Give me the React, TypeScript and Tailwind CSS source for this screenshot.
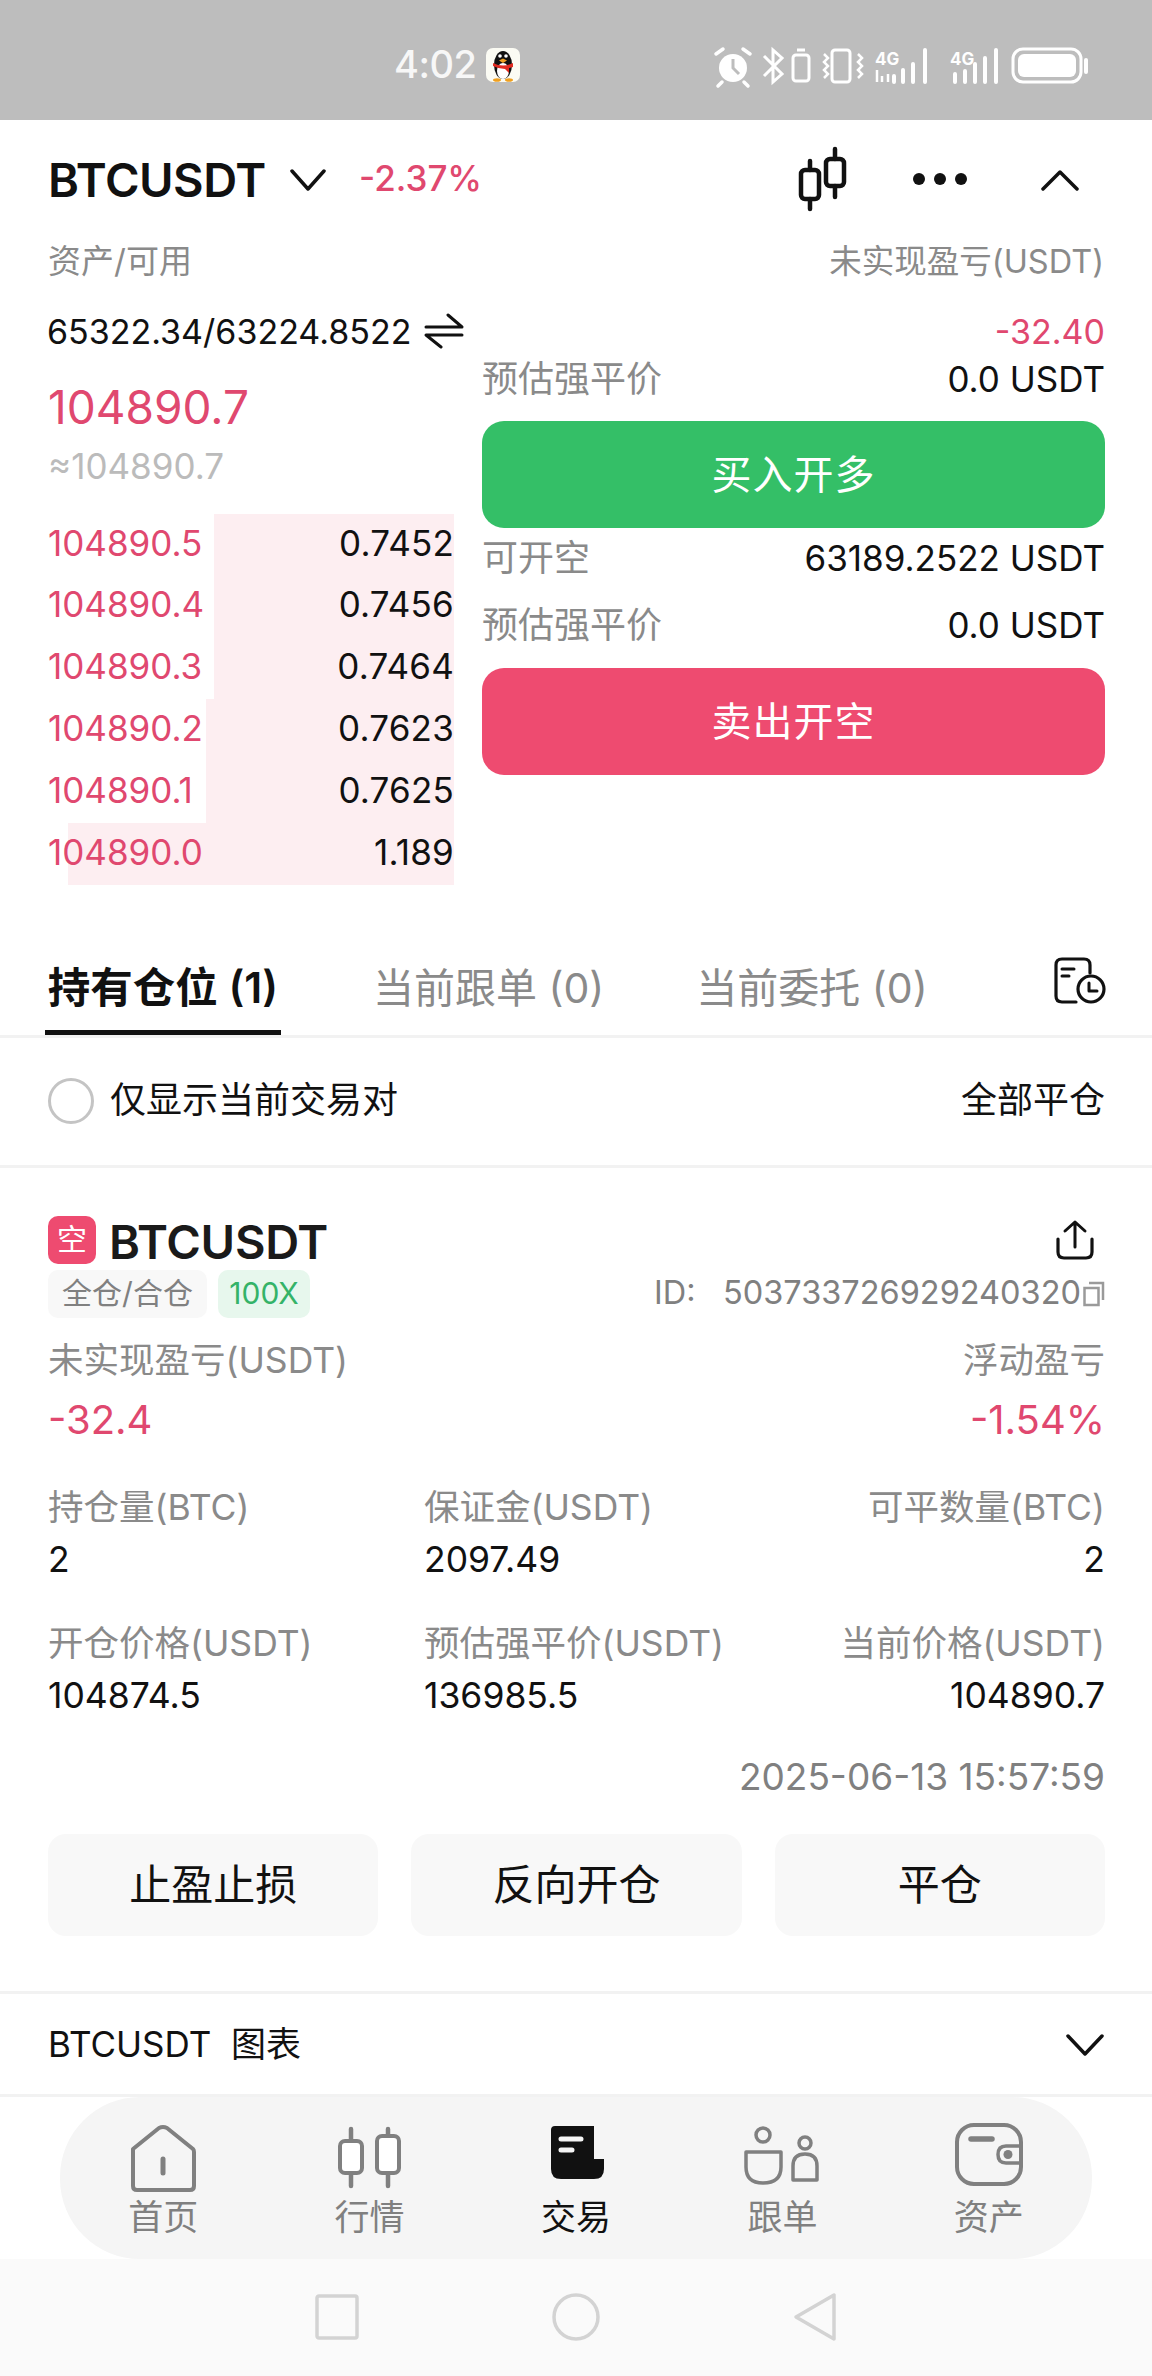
import React from "react";

const font = "font-['Inter','Noto_Sans_CJK_SC',sans-serif]";

function Status() {
  return (
    <div className="h-[120px] bg-[#bdbdbd] flex items-center pl-[394px] pr-[62px] pt-[9px] shrink-0 text-white">
      <span className="text-[38px] font-medium leading-none tracking-[-0.5px] mt-[-1px] text-[#f7f7f7]">4:02</span>
      <svg width="34" height="34" viewBox="0 0 34 34" className="ml-[10px]">
        <rect x="0" y="0" width="34" height="34" rx="7" fill="#fbfbf3" />
        <ellipse cx="17" cy="17" rx="9" ry="14" fill="#111" />
        <ellipse cx="17" cy="23" rx="6" ry="8" fill="#fff" />
        <path d="M13 12.5 L17 10.5 L21 12.5 L17 15Z" fill="#f0a020" />
        <circle cx="14" cy="8" r="1.8" fill="#fff" />
        <circle cx="20" cy="8" r="1.8" fill="#fff" />
        <path d="M7 15 Q17 20 27 15 L27 19 L23 20 L23 25 L19 21 Q13 21 7 18Z" fill="#e02a20" />
        <ellipse cx="11" cy="32" rx="4" ry="1.8" fill="#f0a020" />
        <ellipse cx="23" cy="32" rx="4" ry="1.8" fill="#f0a020" />
      </svg>
      <svg width="380" height="50" viewBox="710 42 380 50" className="ml-auto" fill="none">
        <circle cx="733" cy="70" r="14" fill="#fff" />
        <path d="M733 61 V70 L739 76" stroke="#bdbdbd" strokeWidth="3" />
        <path d="M716 56 L723 51 M750 56 L743 51 M722 84 L718 88 M744 84 L748 88" stroke="#fff" strokeWidth="3.5" strokeLinecap="round" />
        <path d="M764 58 L782 76 L773 84 V52 L782 60 L764 78" stroke="#fff" strokeWidth="3" />
        <rect x="793" y="57" width="16" height="26" rx="3" stroke="#fff" strokeWidth="3" />
        <path d="M797 52 H805" stroke="#fff" strokeWidth="3" />
        <rect x="832" y="52" width="18" height="32" rx="3" stroke="#fff" strokeWidth="3" />
        <path d="M824 56 L828 60 L824 64 L828 68 L824 72 L828 76 L824 80 M858 56 L862 60 L858 64 L862 68 L858 72 L862 76 L858 80" stroke="#fff" strokeWidth="2.5" />
        <text x="875" y="67" fontSize="17" fontWeight="700" fill="#fff" fontFamily="Inter">4G</text>
        <path d="M877 72 V84 M882 78 V84 M888 76 V84" stroke="#fff" strokeWidth="2.5" />
        <path d="M894 78 V84 M903 72 V84 M913 66 V84 M925 52 V84" stroke="#fff" strokeWidth="4" strokeLinecap="round" />
        <text x="950" y="67" fontSize="17" fontWeight="700" fill="#fff" fontFamily="Inter">4G</text>
        <path d="M955 76 V84 M965 73 V84 M975 66 V84 M985 60 V84 M996 52 V84" stroke="#fff" strokeWidth="4" strokeLinecap="round" />
        <rect x="1013" y="51" width="68" height="33" rx="10" stroke="#fff" strokeWidth="3" />
        <rect x="1018" y="56" width="58" height="23" rx="6" fill="#fff" />
        <path d="M1086 62 V74" stroke="#fff" strokeWidth="4" strokeLinecap="round" />
      </svg>
    </div>
  );
}

function Header() {
  return (
    <div className="h-[118px] flex items-center pl-[48px] shrink-0">
      <span className="w-[217px] text-[47px] font-semibold leading-none text-[#111] tracking-[-0.5px] whitespace-nowrap">BTCUSDT</span>
      <svg width="36" height="22" viewBox="0 0 36 22" fill="none" className="ml-[25px] mt-[2px]">
        <path d="M2 2 L18 20 L34 2" stroke="#111" strokeWidth="3.5" strokeLinecap="round" strokeLinejoin="round" />
      </svg>
      <span className="ml-[33px] w-[120px] text-[35px] leading-none text-[#e0486f] font-medium mt-[-2px] whitespace-nowrap">-2.37%</span>
      <svg width="60" height="70" viewBox="0 0 60 70" fill="none" className="ml-[314px]">
        <path d="M17 17 V26 M17 55 V65 M42 5 V15 M42 42 V53" stroke="#111" strokeWidth="4.5" strokeLinecap="round" />
        <rect x="8" y="26" width="18" height="29" rx="4" stroke="#111" strokeWidth="4.5" />
        <rect x="33" y="15" width="18" height="27" rx="4" stroke="#111" strokeWidth="4.5" />
      </svg>
      <svg width="60" height="16" viewBox="0 0 60 16" className="ml-[57px]">
        <circle cx="9" cy="8" r="6" fill="#111" />
        <circle cx="30" cy="8" r="6" fill="#111" />
        <circle cx="51" cy="8" r="6" fill="#111" />
      </svg>
      <svg width="38" height="22" viewBox="0 0 38 22" fill="none" className="ml-[71px] mt-[2px]">
        <path d="M2 20 L19 3 L36 20" stroke="#111" strokeWidth="3.5" strokeLinecap="round" strokeLinejoin="round" />
      </svg>
    </div>
  );
}

const book = [
  { p: "104890.5", q: "0.7452", w: "w-[240px]" },
  { p: "104890.4", q: "0.7456", w: "w-[240px]" },
  { p: "104890.3", q: "0.7464", w: "w-[240px]" },
  { p: "104890.2", q: "0.7623", w: "w-[248px]" },
  { p: "104890.1", q: "0.7625", w: "w-[248px]" },
  { p: "104890.0", q: "1.189", w: "w-[386px]" },
];

function Trade() {
  return (
    <div className="shrink-0">
      <div className="flex justify-between items-center px-[48px] h-[48px] mt-[0px] text-[#8a8a8a]">
        <span className="text-[33px]">资产/可用</span>
        <span className="text-[32.5px] mt-[1px]">未实现盈亏(USDT)</span>
      </div>
      <div className="flex justify-between items-center px-[47px] h-[48px] mt-[21px] text-[34px] text-[#111]">
        <span className="flex items-center">
          65322.34/63224.8522
          <svg width="40" height="36" viewBox="0 0 40 36" fill="none" className="ml-[13px]">
            <path d="M2 14 H38 L24 2 M38 22 H2 L17 34" stroke="#111" strokeWidth="3" strokeLinejoin="round" strokeLinecap="round" />
          </svg>
        </span>
        <span className="text-[#e0486f] text-[34px]">-32.40</span>
      </div>
      <div className="flex pl-[48px] pr-[47px]">
        <div className="w-[406px] shrink-0">
          <div className="text-[46px] leading-[60px] mt-[22px] text-[#e0486f]">104890.7</div>
          <div className="text-[35px] leading-[44px] mt-[7px] text-[#bbbbbb]">≈104890.7</div>
          <div className="mt-[26px] flex flex-col">
            {book.map((r) => (
              <div key={r.p} className="relative h-[61.8px] flex justify-between items-center text-[35px]">
                <div className={`absolute right-0 top-0 bottom-0 bg-[#fdeef1] ${r.w}`} />
                <span className="relative text-[#e0486f] mt-[-4px]">{r.p}</span>
                <span className="relative text-[#111] mt-[-4px] tracking-[0.2px]">{r.q}</span>
              </div>
            ))}
          </div>
        </div>
        <div className="flex-1 ml-[28px]">
          <Kv label="预估强平价" value="0.0 USDT" />
          <div className="h-[107px] mt-[18px] rounded-[22px] bg-[#34bf67] flex items-center justify-center text-white text-[40px] tracking-[1px]">买入开多</div>
          <Kv label="可开空" value="63189.2522 USDT" cls="mt-[6px]" />
          <Kv label="预估强平价" value="0.0 USDT" cls="mt-[19px]" />
          <div className="h-[107px] mt-[19px] rounded-[22px] bg-[#ee4b70] flex items-center justify-center text-white text-[40px] tracking-[1px]">卖出开空</div>
        </div>
      </div>
    </div>
  );
}

function Kv({ label, value, cls = "" }: { label: string; value: string; cls?: string }) {
  return (
    <div className={`flex justify-between items-center h-[48px] ${cls}`}>
      <span className="text-[36px] text-[#8a8a8a]">{label}</span>
      <span className="text-[35px] text-[#111]">{value}</span>
    </div>
  );
}

function Tabs() {
  return (
    <div className="h-[153px] shrink-0 border-b-[3px] border-[#f2f2f2] flex items-end pl-[45px] relative">
      <div className="w-[236px] h-[62px] border-b-[5px] border-[#111] text-[42.5px] font-semibold leading-[30px] text-[#111] whitespace-nowrap flex justify-center">持有仓位 (1)</div>
      <div className="ml-[92px] h-[62px] text-[41px] leading-[30px] text-[#8a8a8a] whitespace-nowrap">当前跟单 (0)</div>
      <div className="ml-[92px] h-[62px] text-[41px] leading-[30px] text-[#8a8a8a] whitespace-nowrap">当前委托 (0)</div>
      <svg width="54" height="48" viewBox="0 0 54 48" fill="none" className="absolute left-[1054px] top-[72px]">
        <path d="M22 45 H8 Q2 45 2 39 V8 Q2 2 8 2 H30 Q36 2 36 8 V16" stroke="#111" strokeWidth="3.2" strokeLinecap="round" />
        <path d="M8 12 H20 M8 19 H15" stroke="#111" strokeWidth="3" strokeLinecap="round" />
        <circle cx="37" cy="32" r="13" stroke="#111" strokeWidth="3.2" />
        <path d="M35 26 V34 H43" stroke="#111" strokeWidth="3" strokeLinecap="round" strokeLinejoin="round" />
      </svg>
    </div>
  );
}

function Filter() {
  return (
    <div className="h-[130px] shrink-0 border-b-[3px] border-[#f2f2f2] flex items-center pl-[48px] pr-[47px]">
      <span className="w-[46px] h-[46px] rounded-full border-[3px] border-[#c4c4c4]" />
      <span className="ml-[16px] text-[36px] text-[#111] mt-[-3px]">仅显示当前交易对</span>
      <span className="ml-auto text-[36px] text-[#111] mt-[-3px]">全部平仓</span>
    </div>
  );
}

function Stat({ label, value, cls }: { label: string; value: string; cls: string }) {
  return (
    <div className={cls}>
      <div className="text-[35.5px] leading-[40px] text-[#8a8a8a] whitespace-nowrap">{label}</div>
      <div className="text-[35.5px] leading-[40px] mt-[12px] text-[#111]">{value}</div>
    </div>
  );
}

function Card() {
  return (
    <div className="pt-[47px] pl-[48px] pr-[47px] h-[826px] shrink-0 border-b-[3px] border-[#f2f2f2]">
      <div className="flex items-center h-[50px]">
        <span className="w-[48px] h-[48px] rounded-[10px] bg-[#ee4b70] text-white text-[30px] flex items-center justify-center">空</span>
        <span className="ml-[13px] text-[47px] font-semibold leading-none text-[#1a1a1a] tracking-[-0.3px] mt-[4px]">BTCUSDT</span>
        <svg width="40" height="42" viewBox="0 0 40 42" fill="none" className="ml-auto mr-[10px]">
          <path d="M20 28 V3 M10 12 L20 3 L30 12" stroke="#111" strokeWidth="3" strokeLinecap="round" strokeLinejoin="round" />
          <path d="M3 20 V33 Q3 39 9 39 H31 Q37 39 37 33 V20" stroke="#111" strokeWidth="3.2" strokeLinecap="round" />
        </svg>
      </div>
      <div className="flex items-center h-[50px] mt-[4px]">
        <span className="h-[48px] w-[159px] rounded-[10px] bg-[#f8f8f8] text-[30px] text-[#808080] flex items-center justify-center">全仓/合仓</span>
        <span className="h-[48px] w-[92px] ml-[11px] rounded-[10px] bg-[#e7f7ed] text-[30px] text-[#34b368] flex items-center justify-center">100X</span>
        <span className="ml-auto text-[32.5px] text-[#808080] whitespace-nowrap">ID:&nbsp;&nbsp;&nbsp;503733726929240320</span>
        <svg width="22" height="26" viewBox="0 0 22 26" fill="none" className="ml-[2px] shrink-0">
          <rect x="1.5" y="7" width="14" height="17" stroke="#9a9a9a" strokeWidth="2.5" />
          <path d="M6 2 H20 V19" stroke="#9a9a9a" strokeWidth="2.5" />
        </svg>
      </div>
      <div className="flex justify-between mt-[18px] text-[35.5px] leading-[48px] text-[#8a8a8a]">
        <span>未实现盈亏(USDT)</span>
        <span>浮动盈亏</span>
      </div>
      <div className="flex justify-between mt-[10px] text-[40px] leading-[50px] text-[#e0486f]">
        <span>-32.4</span>
        <span>-1.54%</span>
      </div>
      <div className="flex mt-[43px]">
        <Stat label="持仓量(BTC)" value="2" cls="w-[376px]" />
        <Stat label="保证金(USDT)" value="2097.49" cls="w-[300px]" />
        <Stat label="可平数量(BTC)" value="2" cls="flex-1 text-right" />
      </div>
      <div className="flex mt-[44px]">
        <Stat label="开仓价格(USDT)" value="104874.5" cls="w-[376px]" />
        <Stat label="预估强平价(USDT)" value="136985.5" cls="w-[300px]" />
        <Stat label="当前价格(USDT)" value="104890.7" cls="flex-1 text-right" />
      </div>
      <div className="text-right text-[37px] leading-[44px] mt-[39px] text-[#808080]">2025-06-13 15:57:59</div>
      <div className="grid grid-cols-3 gap-[33px] mt-[35px]">
        {["止盈止损", "反向开仓", "平仓"].map((t) => (
          <div key={t} className="h-[102px] rounded-[18px] bg-[#f8f8f8] flex items-center justify-center text-[42px] text-[#111]">{t}</div>
        ))}
      </div>
    </div>
  );
}

function ChartRow() {
  return (
    <div className="h-[103px] shrink-0 flex items-center pl-[48px] pr-[47px] text-[35px] text-[#111] border-b-[3px] border-[#f2f2f2]">
      <span>BTCUSDT&nbsp;&nbsp;图表</span>
      <svg width="38" height="22" viewBox="0 0 38 22" fill="none" className="ml-auto mr-[1px] mt-[2px]">
        <path d="M2 2 L19 20 L36 2" stroke="#111" strokeWidth="3.5" strokeLinecap="round" strokeLinejoin="round" />
      </svg>
    </div>
  );
}

const G = "#808080";
const navIcons = [
  <svg key="h" width="80" height="72" viewBox="0 0 80 72" fill="none">
    <path d="M10 28 L36 7 Q40 5 44 7 L70 28 Q71 29 71 31 V65 Q71 69 67 69 H14 Q10 69 10 65 V31 Q10 29 10 28Z" stroke={G} strokeWidth="4" strokeLinejoin="round" />
    <path d="M40 38 V52" stroke={G} strokeWidth="5" strokeLinecap="round" />
  </svg>,
  <svg key="c" width="80" height="72" viewBox="0 0 80 72" fill="none">
    <path d="M21 8 V20 M21 52 V65 M58 8 V15 M58 52 V65" stroke={G} strokeWidth="4.5" strokeLinecap="round" />
    <rect x="10" y="20" width="22" height="32" rx="5" fill="#fff" stroke={G} strokeWidth="4" />
    <rect x="47" y="15" width="22" height="37" rx="5" fill="#fff" stroke={G} strokeWidth="4" />
  </svg>,
  <svg key="t" width="80" height="72" viewBox="0 0 80 72" fill="none">
    <path d="M15 9 Q15 5 19 5 H58 V38 H68 V48 Q68 58 58 58 H25 Q15 58 15 48Z" fill="#111" />
    <path d="M25 18 H45 M25 29 H36" stroke="#f5f5f5" strokeWidth="5" strokeLinecap="round" />
  </svg>,
  <svg key="u" width="80" height="72" viewBox="0 0 80 72" fill="none">
    <circle cx="21" cy="14" r="7" stroke={G} strokeWidth="3.5" />
    <path d="M4 31 H39 V46 Q39 62 21 62 Q4 62 4 46Z" stroke={G} strokeWidth="3.5" strokeLinejoin="round" />
    <circle cx="63" cy="22" r="6" stroke={G} strokeWidth="3.5" />
    <path d="M51 59 V45 Q51 33 63 33 Q75 33 75 45 V59Z" stroke={G} strokeWidth="3.5" strokeLinejoin="round" />
  </svg>,
  <svg key="w" width="80" height="72" viewBox="0 0 80 72" fill="none">
    <rect x="8" y="4" width="64" height="59" rx="17" stroke={G} strokeWidth="4" />
    <path d="M22 18 H43" stroke={G} strokeWidth="5.5" strokeLinecap="round" />
    <path d="M72 25 H57 Q49 25 49 33.5 Q49 42 57 42 H72" stroke={G} strokeWidth="3.5" />
    <circle cx="59" cy="33.5" r="4.5" fill={G} />
  </svg>,
];
const navLabels = ["首页", "行情", "交易", "跟单", "资产"];

function Nav() {
  return (
    <div className="flex-1 relative">
      <div className="h-[162px] mx-[60px] rounded-[80px] bg-[#f5f5f5] grid grid-cols-5 pt-[24px]">
        {navLabels.map((l, i) => (
          <div key={l} className="flex flex-col items-center">
            {navIcons[i]}
            <span className={`text-[35px] leading-[44px] mt-[2px] ${i === 2 ? "text-[#111]" : "text-[#808080]"}`}>{l}</span>
          </div>
        ))}
      </div>
      <div className="h-[117px] bg-[#fafafa] flex items-center justify-center gap-[193px]">
        <svg width="44" height="46" viewBox="0 0 44 46" fill="none">
          <rect x="2" y="2" width="40" height="42" rx="2" stroke="#d3d3d3" strokeWidth="3.5" />
        </svg>
        <svg width="48" height="50" viewBox="0 0 48 50" fill="none">
          <circle cx="24" cy="25" r="22" stroke="#d3d3d3" strokeWidth="3.5" />
        </svg>
        <svg width="44" height="50" viewBox="0 0 44 50" fill="none">
          <path d="M41 3 V47 L3 25Z" stroke="#d3d3d3" strokeWidth="3.5" strokeLinejoin="round" />
        </svg>
      </div>
    </div>
  );
}

export default function App() {
  return (
    <div className={`w-[1152px] h-[2376px] bg-white flex flex-col overflow-hidden ${font}`}>
      <Status />
      <Header />
      <Trade />
      <Tabs />
      <Filter />
      <Card />
      <ChartRow />
      <Nav />
    </div>
  );
}
